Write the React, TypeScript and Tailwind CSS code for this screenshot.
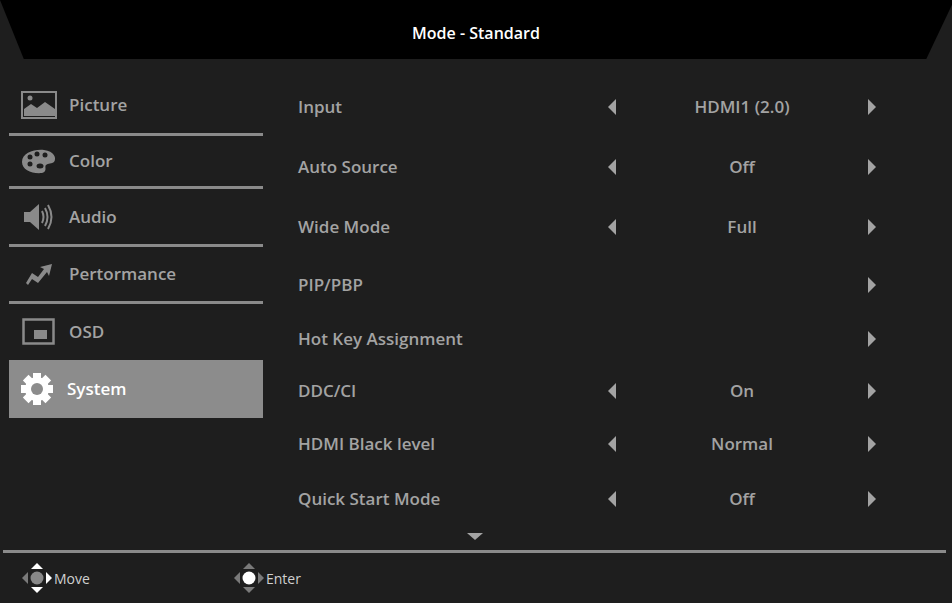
const L = () => (
  <svg width="10" height="16" viewBox="0 0 10 16"><path d="M9 0v16L1 8z" fill="#a3a3a3" /></svg>
)
const R = () => (
  <svg width="10" height="16" viewBox="0 0 10 16"><path d="M1 0v16l8-8z" fill="#a3a3a3" /></svg>
)

const rows: { label: string; value?: string; arrows: 'both' | 'right'; h: string }[] = [
  { label: 'Input', value: 'HDMI1 (2.0)', arrows: 'both', h: 'h-[60px]' },
  { label: 'Auto Source', value: 'Off', arrows: 'both', h: 'h-[60px]' },
  { label: 'Wide Mode', value: 'Full', arrows: 'both', h: 'h-[60px]' },
  { label: 'PIP/PBP', arrows: 'right', h: 'h-[56px]' },
  { label: 'Hot Key Assignment', arrows: 'right', h: 'h-[52px]' },
  { label: 'DDC/CI', value: 'On', arrows: 'both', h: 'h-[52px]' },
  { label: 'HDMI Black level', value: 'Normal', arrows: 'both', h: 'h-[54px]' },
  { label: 'Quick Start Mode', value: 'Off', arrows: 'both', h: 'h-[56px]' },
]

const Icon = ({ name }: { name: string }) => {
  const c = '#8a8a8a'
  if (name === 'Picture')
    return (
      <svg width="36" height="28" viewBox="0 0 36 28"><rect x="1" y="1" width="34" height="26" fill="none" stroke={c} strokeWidth="2" /><circle cx="9" cy="7" r="2.5" fill={c} /><path d="M3 25V18l7-5 6 4 8-6 10 7v7z" fill={c} /></svg>
    )
  if (name === 'Color')
    return (
      <svg width="38" height="26" viewBox="0 0 38 26"><path d="M2 14C2 5 14 1 24 2s13 8 10 12c-2 2-6 1-8 3s2 6-4 8C12 26 2 22 2 14z" fill={c} /><circle cx="10" cy="9" r="2.5" fill="#1e1e1e" /><circle cx="17" cy="6" r="2.5" fill="#1e1e1e" /><circle cx="25" cy="7" r="2.5" fill="#1e1e1e" /><circle cx="10" cy="16" r="2.5" fill="#1e1e1e" /><ellipse cx="20" cy="18" rx="3.5" ry="2.5" fill="#1e1e1e" /></svg>
    )
  if (name === 'Audio')
    return (
      <svg width="32" height="30" viewBox="0 0 32 30"><path d="M1 10h6l9-8v26l-9-8H1z" fill={c} /><path d="M19 9q3 6 0 12M22 6q5 9 0 18M25 3q7 12 0 24" fill="none" stroke={c} strokeWidth="2" /></svg>
    )
  if (name === 'Pertormance')
    return (
      <svg width="28" height="22" viewBox="0 0 28 22"><path d="M1 20l6-10 6 4 6-8-4-2 12-3-3 12-2-4-9 11-6-4-4 6z" fill={c} /></svg>
    )
  if (name === 'OSD')
    return (
      <svg width="34" height="28" viewBox="0 0 34 28"><rect x="1.5" y="1.5" width="30" height="24" fill="none" stroke={c} strokeWidth="2.5" /><rect x="12" y="12" width="13" height="9" fill={c} /></svg>
    )
  return (
    <svg width="34" height="34" viewBox="0 0 34 34">
      <g fill="#fff">
        {[0, 45, 90, 135].map((a) => (
          <rect key={a} x="13" y="1" width="8" height="32" transform={`rotate(${a} 17 17)`} />
        ))}
        <circle cx="17" cy="17" r="12" />
      </g>
      <circle cx="17" cy="17" r="6" fill="#8c8c8c" />
    </svg>
  )
}

const menu = [
  { name: 'Picture', h: 'h-[60px]', line: true },
  { name: 'Color', h: 'h-[53px]', line: true },
  { name: 'Audio', h: 'h-[58px]', line: true },
  { name: 'Pertormance', h: 'h-[57px]', line: true },
  { name: 'OSD', h: 'h-[56px]', line: false },
]

// move: grey centre, white up/down/right; enter: white centre, grey arrows
const Pad = ({ enter }: { enter?: boolean }) => {
  const a = enter ? '#7a7a7a' : '#fff'
  return (
    <svg width="34" height="34" viewBox="0 0 34 34">
      <path d="M17 2l-6 6h12z" fill={a} />
      <path d="M17 32l-6-6h12z" fill={a} />
      <path d="M2 17l6-6v12z" fill="#7a7a7a" />
      <path d="M32 17l-6-6v12z" fill={a} />
      <circle cx="17" cy="17" r="6.5" fill={enter ? '#fff' : '#888'} />
    </svg>
  )
}

export default function App() {
  return (
    <div className="w-[952px] h-[603px] bg-[#1e1e1e] flex flex-col overflow-hidden text-[#a3a3a3] font-semibold" style={{ fontFamily: '"Open Sans", sans-serif' }}>
      <div className="h-[59px] bg-black [clip-path:polygon(0_0,100%_0,100%_8%,97.3%_100%,2.5%_100%)] flex items-center justify-center text-white text-[16px] shrink-0 pt-[6px]">
        Mode - Standard
      </div>
      <div className="flex flex-1">
        <div className="w-[263px] pl-[9px] pt-[17px]">
          {menu.map((m) => (
            <div key={m.name} className={`${m.h} flex items-center gap-[10px] pl-[10px] ${m.line ? 'border-b-[3px] border-[#8a8a8a]' : ''}`}>
              <div className="w-[40px] flex justify-center"><Icon name={m.name} /></div>
              <span className="text-[17px]">{m.name}</span>
            </div>
          ))}
          <div className="h-[58px] bg-[#8c8c8c] flex items-center gap-[10px] pl-[8px] text-white">
            <div className="w-[40px] flex justify-center"><Icon name="System" /></div>
            <span className="text-[17px]">System</span>
          </div>
        </div>
        <div className="flex-1 pl-[35px] pt-[18px]">
          {rows.map((r, i) => (
            <div key={i} className={`${r.h} flex items-center text-[17px] pr-[75px]`}>
              <span className="flex-1">{r.label}</span>
              <div className="w-[270px] flex items-center justify-between">
                {r.arrows === 'both' ? <L /> : <span />}
                <span>{r.value}</span>
                <R />
              </div>
            </div>
          ))}
          <div className="flex pl-[169px] pt-[6px]">
            <svg width="16" height="8" viewBox="0 0 16 8"><path d="M0 0h16L8 7z" fill="#a3a3a3" /></svg>
          </div>
        </div>
      </div>
      <div className="h-[3px] bg-[#8a8a8a] ml-[3px] mr-[6px]" />
      <div className="h-[50px] flex items-center pl-[20px] text-[14px] text-[#d0d0d0] font-normal">
        <div className="flex items-center w-[212px]"><Pad /><span>Move</span></div>
        <div className="flex items-center"><Pad enter /><span>Enter</span></div>
      </div>
    </div>
  )
}
